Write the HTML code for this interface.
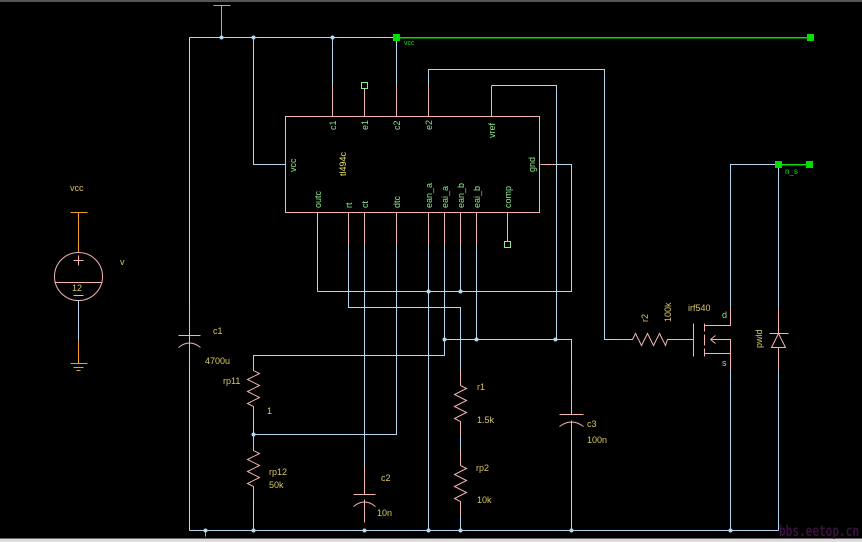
<!DOCTYPE html>
<html><head><meta charset="utf-8"><style>
html,body{margin:0;padding:0;background:#000;width:862px;height:542px;overflow:hidden}
svg{display:block}
text{font-family:"Liberation Sans",sans-serif;font-size:9px}
.w{stroke:#b4d8f0;fill:none;stroke-width:1;shape-rendering:crispEdges}
.p{stroke:#f4b4b4;fill:none;stroke-width:1}
.o{stroke:#f0a020;fill:none;stroke-width:1;shape-rendering:crispEdges}
.g{stroke:#00e000;fill:none;stroke-width:1.5;shape-rendering:crispEdges}
.pl{fill:#90e890}
.lb{fill:#d8c860}
.d{fill:#b4d8f0}
</style></head><body>
<svg width="862" height="542" viewBox="0 0 862 542" xmlns="http://www.w3.org/2000/svg">
<rect x="0" y="0" width="862" height="2" fill="#555"/>
<rect x="0" y="538" width="862" height="4" fill="#666"/>
<rect x="0" y="539" width="862" height="3" fill="#ddd"/>

<g transform="translate(0.5,0.5)">
<path class="w" d="M189 37H396 M189 37V530 M253 37V164H285 M332 37V85 M396 37V85"/>
<path class="g" d="M396 37H810"/>
<path class="o" d="M213 5H230 M221 5V37"/>

<rect class="p" x="285" y="116" width="254" height="96" shape-rendering="crispEdges"/>
<path class="p" shape-rendering="crispEdges" d="M332 85V116 M364 88V116 M396 85V116 M428 85V116 M491 85V116 M540 164H555"/>
<rect x="361" y="82" width="6" height="6" fill="none" stroke="#90e890" shape-rendering="crispEdges"/>
<path class="w" d="M428 85V69H604V339H632 M491 85H556V339 M555 164H571V291H317"/>
<path class="p" shape-rendering="crispEdges" d="M348 212V245 M364 212V245 M396 212V245 M428 212V245 M444 212V245 M460 212V245 M476 212V245 M507 212V241"/>
<path class="w" d="M317 212V291"/>
<rect x="504" y="241" width="6" height="6" fill="none" stroke="#90e890" shape-rendering="crispEdges"/>
<path class="w" d="M348 245V307H460V385 M364 245V494 M396 245V434H253 M428 245V530 M444 245V355H253V370 M460 245V291 M476 245V339 M444 339H571V414"/>

<path class="w" d="M189 530H778"/>
<path class="o" d="M205 531V536"/>

<path class="p" d="M189 305V335 M178 335H200 M178 347Q189 338 200 347 M189 340V370"/>
<path class="p" d="M253 360V370 L259 373 L247 379 L259 385 L247 391 L259 397 L247 403 L253 406V420"/>
<path class="w" d="M253 420V450"/>
<path class="p" d="M253 440V450 L259 453 L247 459 L259 465 L247 471 L259 477 L247 483 L253 486V500"/>
<path class="w" d="M253 500V530"/>
<path class="p" d="M364 466V494 M353 494H375 M353 506Q364 497 375 506 M364 499V522"/>
<path class="p" d="M460 370V385 L466 388 L454 394 L466 400 L454 406 L466 412 L454 418 L460 421V435"/>
<path class="w" d="M460 435V450"/>
<path class="p" d="M460 450V465 L466 468 L454 474 L466 480 L454 486 L466 492 L454 498 L460 501V515"/>
<path class="w" d="M460 515V530"/>
<path class="p" d="M571 385V414 M559 414H583 M559 426Q571 417 583 426 M571 420V440"/>
<path class="w" d="M571 440V530"/>
<path class="p" d="M620 339H632 L635 333 L641 345 L647 333 L653 345 L659 333 L665 345 L667 339 H693"/>
<path class="p" d="M693 323V356 M704 323V331 M704 334V345 M704 348V356 M704 325H730V307 M704 353H730V370 M710 339H730V353 M710 339L715 335 M710 339L715 343"/>
<path class="w" d="M730 307V164H778 M730 370V530"/>
<path class="g" d="M778 164H810"/>
<path class="w" d="M778 164V307 M778 370V530"/>
<path class="p" d="M778 307V333 M769 333H788 M778 333L771 347H785Z M778 347V370"/>
<path class="o" d="M70 212H87 M78 212V252"/>
<circle class="p" cx="78" cy="276" r="24"/>
<path class="p" d="M54 282H102 M73 260H83 M78 255V265 M73 295H83"/>
<path class="w" d="M78 300V340"/>
<path class="o" d="M78 340V363 M70 363H87 M73 367H83 M76 370H80"/>
</g>

<rect x="393" y="34" width="7" height="7" fill="#00e000"/>
<rect x="807" y="34" width="7" height="7" fill="#00e000"/>
<text x="404" y="45" fill="#00e000" style="font-size:7px">vcc</text>
<rect x="775" y="161" width="7" height="7" fill="#00e000"/>
<rect x="806" y="161" width="7" height="7" fill="#00e000"/>
<text x="785" y="174" fill="#00e000" style="font-size:8px">n_s</text>

<g class="pl">
<text transform="translate(336,130) rotate(-90)">c1</text>
<text transform="translate(368,130) rotate(-90)">e1</text>
<text transform="translate(400,130) rotate(-90)">c2</text>
<text transform="translate(432,130) rotate(-90)">e2</text>
<text transform="translate(495,138) rotate(-90)">vref</text>
<text transform="translate(296,172) rotate(-90)">vcc</text>
<text transform="translate(535,172) rotate(-90)">gnd</text>
<text transform="translate(321,208) rotate(-90)">outc</text>
<text transform="translate(352,208) rotate(-90)">rt</text>
<text transform="translate(368,208) rotate(-90)">ct</text>
<text transform="translate(400,208) rotate(-90)">dtc</text>
<text transform="translate(432,208) rotate(-90)">ean_a</text>
<text transform="translate(448,208) rotate(-90)">eai_a</text>
<text transform="translate(464,208) rotate(-90)">ean_b</text>
<text transform="translate(480,208) rotate(-90)">eai_b</text>
<text transform="translate(511,208) rotate(-90)">comp</text>
</g>
<text transform="translate(346,176) rotate(-90)" fill="#e8e060">tl494c</text>

<text class="lb" x="213" y="334">c1</text>
<text class="lb" x="205" y="364">4700u</text>
<text class="lb" x="223" y="384">rp11</text>
<text class="lb" x="267" y="414">1</text>
<text class="lb" x="269" y="475">rp12</text>
<text class="lb" x="269" y="488">50k</text>
<text class="lb" x="381" y="481">c2</text>
<text class="lb" x="377" y="516">10n</text>
<text class="lb" x="477" y="390">r1</text>
<text class="lb" x="477" y="423">1.5k</text>
<text class="lb" x="476" y="471">rp2</text>
<text class="lb" x="477" y="503">10k</text>
<text class="lb" x="587" y="427">c3</text>
<text class="lb" x="587" y="443">100n</text>
<text class="lb" transform="translate(648,322) rotate(-90)">r2</text>
<text class="lb" transform="translate(671,322) rotate(-90)">100k</text>
<text class="lb" x="688" y="311">irf540</text>
<text class="pl" x="722" y="318">d</text>
<text class="pl" x="722" y="366">s</text>
<text class="lb" transform="translate(762,348) rotate(-90)">pwld</text>
<text class="lb" x="70" y="191">vcc</text>
<text class="lb" x="120" y="265">v</text>
<text class="lb" x="72" y="291">12</text>

<g class="d">
<circle cx="221.5" cy="37.5" r="2"/><circle cx="253.5" cy="37.5" r="2"/><circle cx="332.5" cy="37.5" r="2"/>
<circle cx="428.5" cy="291.5" r="2"/><circle cx="460.5" cy="291.5" r="2"/>
<circle cx="444.5" cy="339.5" r="2"/><circle cx="476.5" cy="339.5" r="2"/><circle cx="555.5" cy="339.5" r="2"/>
<circle cx="253.5" cy="434.5" r="2"/>
<circle cx="205.5" cy="530.5" r="2"/><circle cx="253.5" cy="530.5" r="2"/><circle cx="364.5" cy="530.5" r="2"/>
<circle cx="428.5" cy="530.5" r="2"/><circle cx="460.5" cy="530.5" r="2"/><circle cx="571.5" cy="530.5" r="2"/>
<circle cx="730.5" cy="530.5" r="2"/>
</g>

<text x="779" y="536" fill="#3a1040" textLength="80" lengthAdjust="spacingAndGlyphs" style="font-size:15px;font-weight:bold;font-family:'DejaVu Sans Mono',monospace">bbs.eetop.cn</text>
</svg>
</body></html>
